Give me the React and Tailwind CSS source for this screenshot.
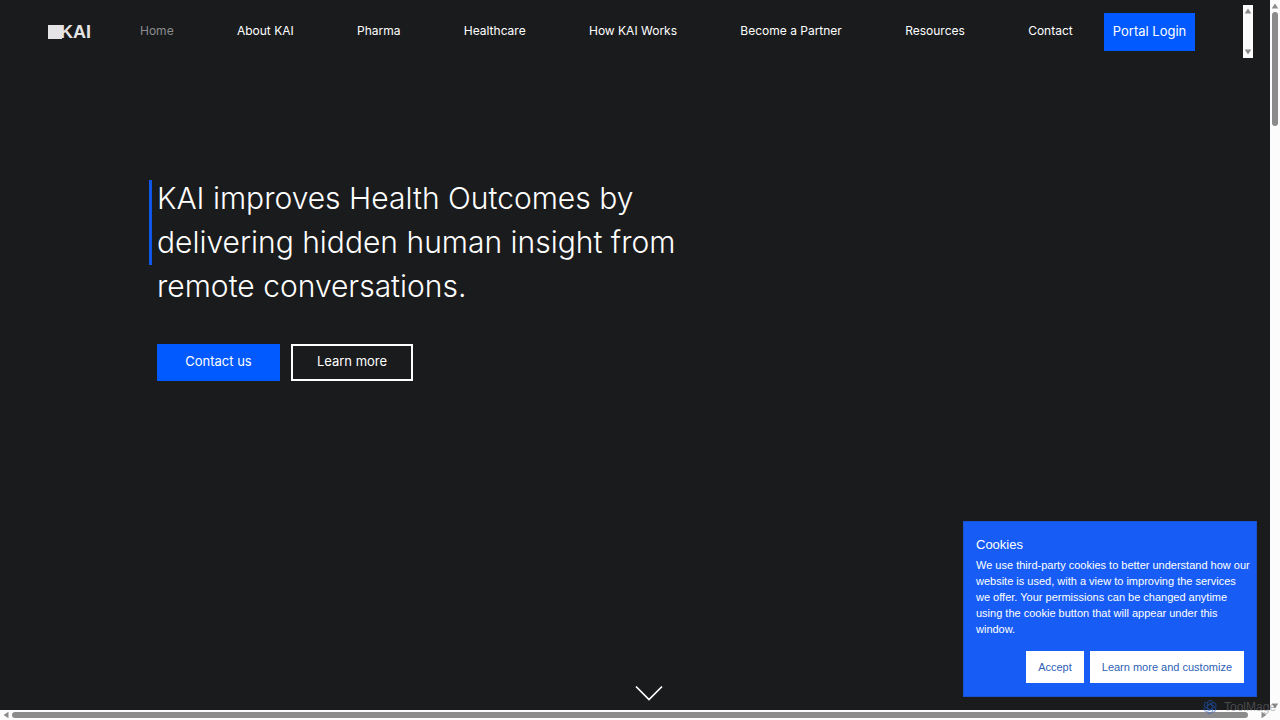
import React from "react";

const links = [
  "About KAI",
  "Pharma",
  "Healthcare",
  "How KAI Works",
  "Become a Partner",
  "Resources",
  "Contact",
];

function Arrow({ d }) {
  return (
    <svg viewBox="0 0 8 8" className="size-2 shrink-0" fill="#8b8b8b" aria-hidden="true">
      <path d={d} />
    </svg>
  );
}

const UP = "M4 1.5 7.3 6.5H.7Z";
const DOWN = "M4 6.5.7 1.5H7.3Z";
const LEFT = "M1.5 4 6.5.7V7.3Z";
const RIGHT = "M6.5 4 1.5 7.3V.7Z";

function Logo() {
  return (
    <a
      href="#home"
      className="flex w-[43px] shrink-0 items-center font-['Liberation_Sans',Arial,sans-serif] text-lg leading-[14px] font-bold text-[#e4e4e6]"
    >
      <span className="h-[14px] w-[14px] shrink-0 bg-[#e4e4e6]" />
      <span className="-ml-[2px]">KAI</span>
    </a>
  );
}

function Header() {
  return (
    <header className="flex items-start pt-[5px] pr-[17px] pl-12">
      <div className="flex h-[53px] items-center">
        <Logo />
      </div>
      <nav className="ml-[49px] flex flex-1 items-center justify-between pt-2 pr-12 text-xs leading-5 text-white">
        <a href="#home" className="-mt-[2px] text-[#8c8d8f]">Home</a>
        {links.map((label) => (
          <a key={label} href="#" className="-mt-[2px] whitespace-nowrap">
            {label}
          </a>
        ))}
        <a
          href="#login"
          className="-ml-8 flex h-[38px] w-[91px] items-center justify-center bg-[#005aff] pb-[2px] text-[13px] whitespace-nowrap"
        >
          Portal Login
        </a>
      </nav>
      <div className="flex h-[53px] w-[10px] flex-col items-center justify-between bg-[#fcfcfc] py-[2px]">
        <Arrow d={UP} />
        <Arrow d={DOWN} />
      </div>
    </header>
  );
}

function Hero() {
  return (
    <main className="mt-[118px] ml-[149px] max-w-[560px]">
      <div className="flex items-start gap-[5px]">
        <div className="mt-1 h-[85px] w-[3px] shrink-0 bg-[#0f57e6]" />
        <h1 className="text-3xl leading-[44px] font-light text-white">
          <span className="block whitespace-nowrap">KAI improves Health Outcomes by</span>
          <span className="block whitespace-nowrap">delivering hidden human insight from</span>
          <span className="block whitespace-nowrap">remote conversations.</span>
        </h1>
      </div>
      <div className="mt-9 ml-2 flex gap-[11px] text-[13px] text-white">
        <a href="#contact" className="flex h-[37px] w-[123px] items-center justify-center bg-[#005aff] pb-[2px]">
          Contact us
        </a>
        <a href="#more" className="flex h-[37px] w-[122px] items-center justify-center border-2 border-white pb-[2px]">
          Learn more
        </a>
      </div>
    </main>
  );
}

function Cookies() {
  return (
    <section
      aria-labelledby="cookies"
      className="absolute right-[23px] bottom-[23px] w-[294px] border border-[#1b52d0] bg-[#175cf4] p-3 font-['Liberation_Sans',Arial,sans-serif] text-white"
    >
      <h2 id="cookies" className="pt-[1px] text-[13px] leading-5">Cookies</h2>
      <p className="mt-[2px] text-[11px] leading-4 whitespace-nowrap">
        We use third-party cookies to better understand how our
        <br />
        website is used, with a view to improving the services
        <br />
        we offer. Your permissions can be changed anytime
        <br />
        using the cookie button that will appear under this
        <br />
        window.
      </p>
      <div className="mt-[14px] mb-[1px] flex justify-end gap-[6px] text-[11px] text-[#2d5fb5]">
        <button type="button" className="h-8 bg-white px-3">Accept</button>
        <button type="button" className="h-8 bg-white px-3">Learn more and customize</button>
      </div>
    </section>
  );
}

function Watermark() {
  return (
    <div className="pointer-events-none absolute right-1 bottom-[5px] flex items-center gap-[6px] font-['Liberation_Sans',Arial,sans-serif] opacity-50">
      <svg viewBox="0 0 16 16" className="size-4" fill="none" stroke="#1f5fd6" strokeWidth="1.2" aria-hidden="true">
        {[0, 60, 120, 180, 240, 300].map((a) => (
          <path key={a} transform={`rotate(${a} 8 8)`} d="M5.500 9.500V4.200a2.800 2.800 0 0 1 5-1.500M5.500 6.500 8 5l3.500 2" />
        ))}
      </svg>
      <span className="text-xs leading-4 text-[#77787a]">ToolMage</span>
    </div>
  );
}

export default function App() {
  return (
    <div className="relative grid h-screen grid-cols-[1fr_10px] grid-rows-[1fr_10px] overflow-hidden bg-[#fcfcfc] font-[Inter,'Liberation_Sans',sans-serif]">
      <div className="flex min-w-0 flex-col bg-[#1a1b1d]">
        <Header />
        <Hero />
        <a href="#next" aria-label="Scroll down" className="mt-auto mb-[9px] ml-[27px] self-center">
          <svg viewBox="0 0 28 16" className="h-4 w-7" fill="none" stroke="#fff" strokeWidth="1.7" aria-hidden="true">
            <path d="M1 1.500 14 14.500 27 1.500" />
          </svg>
        </a>
      </div>
      <div className="flex flex-col items-center gap-[2px] pt-[2px]">
        <Arrow d={UP} />
        <div className="h-[114px] w-[6px] rounded-full bg-[#8b8b8b]" />
        <div className="mt-auto">
          <Arrow d={DOWN} />
        </div>
      </div>
      <div className="flex items-center gap-[2px] pr-[2px] pl-[2px]">
        <Arrow d={LEFT} />
        <div className="mr-[10px] h-[6px] flex-1 rounded-full bg-[#8b8b8b]" />
        <Arrow d={RIGHT} />
      </div>
      <div />
      <Watermark />
      <Cookies />
    </div>
  );
}
